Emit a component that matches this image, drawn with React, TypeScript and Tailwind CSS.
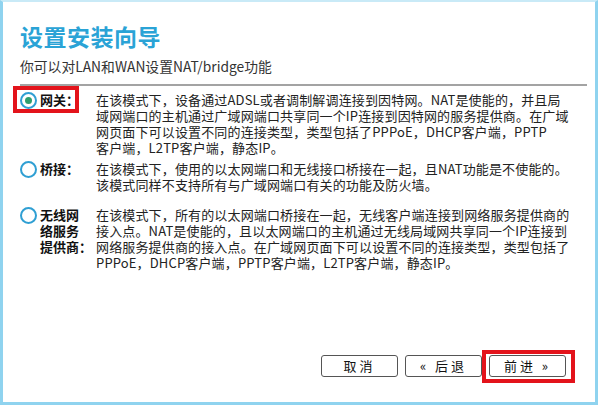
import React from "react";

const font = { fontFamily: '"Noto Sans CJK SC", "Noto Sans", sans-serif' };

function Radio({ checked }: { checked?: boolean }) {
  return (
    <span className="flex h-[17px] w-[17px] shrink-0 items-center justify-center rounded-full border-2 border-[#2f9fd3] bg-white">
      {checked && <span className="h-[7px] w-[7px] rounded-full bg-[#2e9f6e]" />}
    </span>
  );
}

function Row({
  checked,
  label,
  lines,
  highlight,
  className,
}: {
  checked?: boolean;
  label: string[];
  lines: string[];
  highlight?: boolean;
  className?: string;
}) {
  return (
    <div className={"relative flex items-start " + (className ?? "")}>
      {highlight && (
        <div className="pointer-events-none absolute left-[-7px] top-[-6px] h-[27px] w-[66px] border-4 border-[#e3131b]" />
      )}
      <div className="flex w-[76px] shrink-0 items-start gap-[3px]">
        <div className="pt-[0px]">
          <Radio checked={checked} />
        </div>
        <div className="flex flex-col text-[13px] font-bold leading-[16px] text-[#111]">
          {label.map((l) => (
            <span key={l} className="whitespace-nowrap">{l}</span>
          ))}
        </div>
      </div>
      <div className="flex w-[480px] flex-col text-[13px] leading-[16px] tracking-[0.15px] text-[#222]">
        {lines.map((l) => (
          <span key={l} className="whitespace-nowrap">{l}</span>
        ))}
      </div>
    </div>
  );
}

function Btn({ children, highlight }: { children: React.ReactNode; highlight?: boolean }) {
  return (
    <div className="relative">
      {highlight && (
        <div className="pointer-events-none absolute bottom-[-6px] left-[-7px] right-[-9px] top-[-5px] border-4 border-[#e3131b]" />
      )}
      <div className="flex h-[22px] w-[77px] items-center justify-center rounded-[3px] border border-[#555] bg-white text-[13px] tracking-[3px] text-[#111]">
        {children}
      </div>
    </div>
  );
}

export default function App() {
  return (
    <div className="h-[406px] w-[600px] bg-white" style={font}>
      <div className="flex h-[405px] w-[598px] flex-col border-b-[3px] border-l-[3px] border-r-[3px] border-t-2 border-b-[#8fd3ef] border-l-[#8fd3ef] border-r-[#8fd3ef] border-t-[#c9eaf7] bg-white">
        <div className="pl-[17px] pt-[19px]">
          <div className="text-[23px] font-bold leading-[30px] tracking-[0.5px] text-[#2aa3d6]">设置安装向导</div>
          <div className="mt-[7px] text-[13.8px] leading-[16px] text-[#333]">你可以对LAN和WAN设置NAT/bridge功能</div>
        </div>
        <div className="ml-[17px] mt-[10px] h-[2px] w-[567px] bg-[#a3a3a3]" />
        <div className="flex flex-col pl-[17px] pt-[6px]">
          <Row
            checked
            highlight
            label={["网关："]}
            lines={[
              "在该模式下，设备通过ADSL或者调制解调连接到因特网。NAT是使能的，并且局",
              "域网端口的主机通过广域网端口共享同一个IP连接到因特网的服务提供商。在广域",
              "网页面下可以设置不同的连接类型，类型包括了PPPoE，DHCP客户端，PPTP",
              "客户端，L2TP客户端，静态IP。",
            ]}
          />
          <Row
            className="mt-[5px]"
            label={["桥接："]}
            lines={[
              "在该模式下，使用的以太网端口和无线接口桥接在一起，且NAT功能是不使能的。",
              "该模式同样不支持所有与广域网端口有关的功能及防火墙。",
            ]}
          />
          <Row
            className="mt-[14px]"
            label={["无线网", "络服务", "提供商："]}
            lines={[
              "在该模式下，所有的以太网端口桥接在一起，无线客户端连接到网络服务提供商的",
              "接入点。NAT是使能的，且以太网端口的主机通过无线局域网共享同一个IP连接到",
              "网络服务提供商的接入点。在广域网页面下可以设置不同的连接类型，类型包括了",
              "PPPoE，DHCP客户端，PPTP客户端，L2TP客户端，静态IP。",
            ]}
          />
        </div>
        <div className="flex-1" />
        <div className="flex items-center justify-end gap-[7px] pb-[25px] pr-[29px]">
          <Btn>取消</Btn>
          <Btn>« 后退</Btn>
          <Btn highlight>前进 »</Btn>
        </div>
      </div>
    </div>
  );
}
